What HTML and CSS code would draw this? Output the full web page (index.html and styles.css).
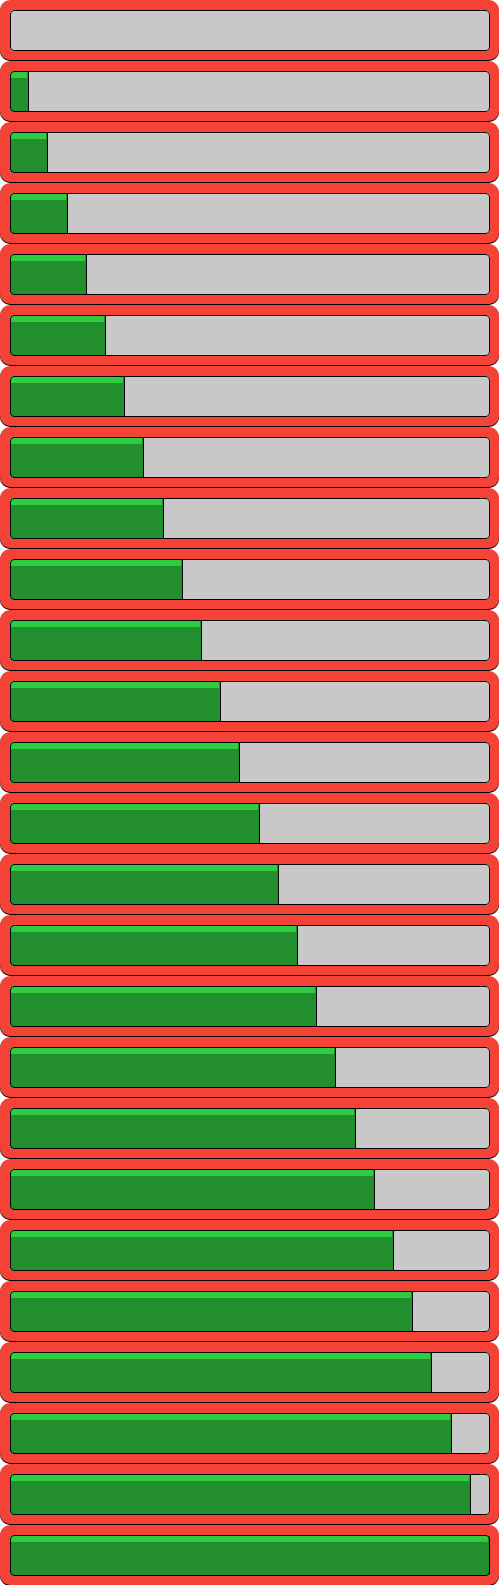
FILE: index.html
```html
<!DOCTYPE html>
<html>
<head>
<meta charset="utf-8">
<link rel="stylesheet" href="styles.css">
</head>
<body>
<div class="list">
  <div class="row"><div class="track"></div></div>
  <div class="row"><div class="track"><div class="bar" style="width:4%"></div></div></div>
  <div class="row"><div class="track"><div class="bar" style="width:8%"></div></div></div>
  <div class="row"><div class="track"><div class="bar" style="width:12%"></div></div></div>
  <div class="row"><div class="track"><div class="bar" style="width:16%"></div></div></div>
  <div class="row"><div class="track"><div class="bar" style="width:20%"></div></div></div>
  <div class="row"><div class="track"><div class="bar" style="width:24%"></div></div></div>
  <div class="row"><div class="track"><div class="bar" style="width:28%"></div></div></div>
  <div class="row"><div class="track"><div class="bar" style="width:32%"></div></div></div>
  <div class="row"><div class="track"><div class="bar" style="width:36%"></div></div></div>
  <div class="row"><div class="track"><div class="bar" style="width:40%"></div></div></div>
  <div class="row"><div class="track"><div class="bar" style="width:44%"></div></div></div>
  <div class="row"><div class="track"><div class="bar" style="width:48%"></div></div></div>
  <div class="row"><div class="track"><div class="bar" style="width:52%"></div></div></div>
  <div class="row"><div class="track"><div class="bar" style="width:56%"></div></div></div>
  <div class="row"><div class="track"><div class="bar" style="width:60%"></div></div></div>
  <div class="row"><div class="track"><div class="bar" style="width:64%"></div></div></div>
  <div class="row"><div class="track"><div class="bar" style="width:68%"></div></div></div>
  <div class="row"><div class="track"><div class="bar" style="width:72%"></div></div></div>
  <div class="row"><div class="track"><div class="bar" style="width:76%"></div></div></div>
  <div class="row"><div class="track"><div class="bar" style="width:80%"></div></div></div>
  <div class="row"><div class="track"><div class="bar" style="width:84%"></div></div></div>
  <div class="row"><div class="track"><div class="bar" style="width:88%"></div></div></div>
  <div class="row"><div class="track"><div class="bar" style="width:92%"></div></div></div>
  <div class="row"><div class="track"><div class="bar" style="width:96%"></div></div></div>
  <div class="row"><div class="track"><div class="bar" style="width:100%"></div></div></div>
</div>
</body>
</html>
```
FILE: styles.css
```css
html, body {
  margin: 0;
  padding: 0;
  background: #ffffff;
}

.list {
  display: flex;
  flex-direction: column;
  gap: 1px;
  width: 499px;
}

.row {
  box-sizing: border-box;
  height: 60px;
  border-style: solid;
  border-color: #f44336;
  border-width: 10px 9px 9px 10px;
  border-radius: 10px;
  background: #f44336;
  box-shadow: 0 1px 0 0 #000000;
}

.track {
  position: relative;
  box-sizing: border-box;
  height: 41px;
  border-radius: 4px;
  background: #c8c8c8;
  overflow: hidden;
  display: flex;
}

.track::after {
  content: "";
  position: absolute;
  inset: 0;
  border: 1px solid #000000;
  border-radius: 4px;
  pointer-events: none;
}

.bar {
  position: relative;
  box-sizing: border-box;
  height: 100%;
  background: #228e2e;
  border-right: 1px solid #000000;
}

.bar::before {
  content: "";
  position: absolute;
  left: 0;
  top: 0;
  right: 1px;
  height: 7px;
  background: #2ecc40;
}
```
